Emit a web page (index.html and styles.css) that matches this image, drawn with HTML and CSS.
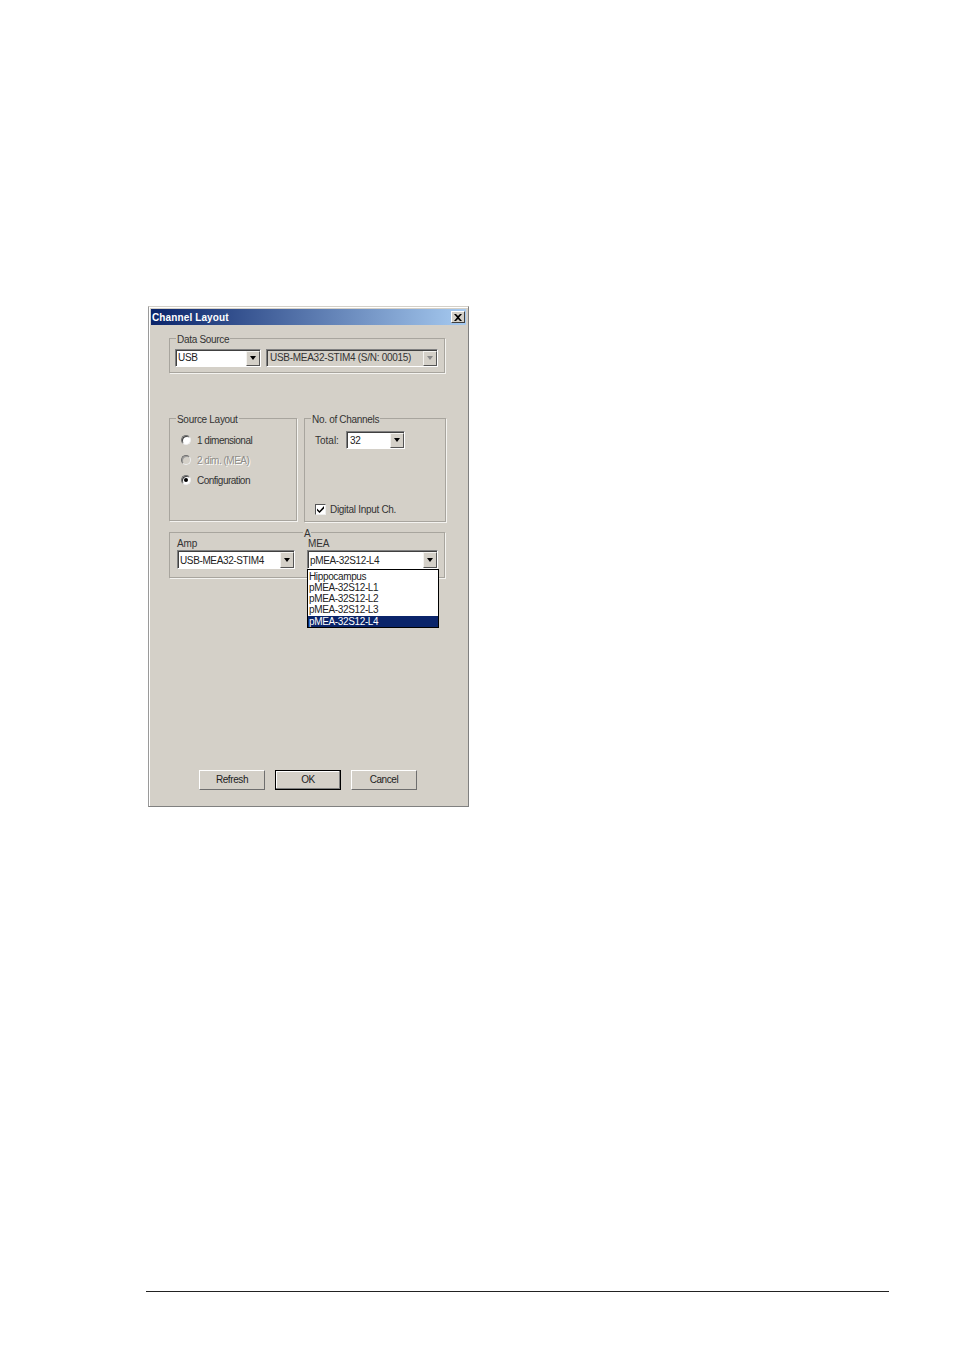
FILE: index.html
```html
<!DOCTYPE html>
<html lang="en">
<head>
<meta charset="utf-8">
<title>Channel Layout</title>
<link rel="stylesheet" href="styles.css">
</head>
<body>
<main class="page">
  <section class="dialog">
    <header class="titlebar">
      <span class="title">Channel Layout</span>
      <button class="close" aria-label="Close"><svg width="8" height="7" viewBox="0 0 8 7"><path d="M0 0h2l2 2 2-2h2L5 3.500 8 7H6L4 5 2 7H0l3-3.500z" fill="#000"/></svg></button>
    </header>
    <div class="content">
      <fieldset class="group group-source">
        <legend>Data Source</legend>
        <div class="combo combo-usb"><span class="value">USB</span><span class="arrow"><i></i></span></div>
        <div class="combo combo-device disabled"><span class="value">USB-MEA32-STIM4 (S/N: 00015)</span><span class="arrow"><i></i></span></div>
      </fieldset>
      <div class="middle">
        <fieldset class="group group-layout">
          <legend>Source Layout</legend>
          <label class="radio"><span class="dot"></span>1 dimensional</label>
          <label class="radio disabled"><span class="dot"></span>2 dim. (MEA)</label>
          <label class="radio"><span class="dot on"></span>Configuration</label>
        </fieldset>
        <fieldset class="group group-channels">
          <legend>No. of Channels</legend>
          <div class="total"><span class="total-label">Total:</span><div class="combo combo-total"><span class="value">32</span><span class="arrow"><i></i></span></div></div>
          <label class="check"><span class="box"><svg width="9" height="9" viewBox="0 0 9 9"><path d="M1 3.500l2.500 2.500L8 1v2.500L3.500 8 1 5.500z" fill="#000"/></svg></span>Digital Input Ch.</label>
        </fieldset>
      </div>
      <fieldset class="group group-a">
        <legend>A</legend>
        <div class="field field-amp">
          <span class="caption">Amp</span>
          <div class="combo combo-amp"><span class="value">USB-MEA32-STIM4</span><span class="arrow"><i></i></span></div>
        </div>
        <div class="field field-mea">
          <span class="caption">MEA</span>
          <div class="combo combo-mea"><span class="value">pMEA-32S12-L4</span><span class="arrow"><i></i></span></div>
          <ul class="list">
            <li>Hippocampus</li>
            <li>pMEA-32S12-L1</li>
            <li>pMEA-32S12-L2</li>
            <li>pMEA-32S12-L3</li>
            <li class="selected">pMEA-32S12-L4</li>
          </ul>
        </div>
      </fieldset>
      <div class="buttons">
        <button class="btn">Refresh</button>
        <button class="btn default">OK</button>
        <button class="btn">Cancel</button>
      </div>
    </div>
  </section>
  <hr class="rule">
</main>
</body>
</html>
```
FILE: styles.css
```css
* { box-sizing: border-box; }
html, body { margin: 0; padding: 0; background: #fff; }
body { width: 954px; height: 1350px; overflow: hidden; font-family: "Liberation Sans", Arial, sans-serif; font-size: 10px; letter-spacing: -0.3px; color: #222; }
.page { padding: 306px 0 0 148px; }

.dialog {
  width: 321px; height: 501px; background: #d4d0c8;
  border: 1px solid #808080; border-top-color: #d4d0c8; border-left-color: #9a9a9a;
  box-shadow: inset 1px 1px 0 #fff; padding: 2px 2px 0 2px;
  display: flex; flex-direction: column;
}
.titlebar {
  height: 16px; flex: none; display: flex; align-items: center; justify-content: space-between;
  background: linear-gradient(90deg, #0a246a, #a6caf0); padding: 0 1px;
}
.title { color: #fff; font-weight: 700; letter-spacing: 0.12px; }
.close {
  width: 14px; height: 12px; padding: 0; background: #d4d0c8; display: flex; align-items: center; justify-content: center;
  border: 1px solid; border-color: #fff #404040 #404040 #fff;
}

.content { padding: 0 0 0 18px; flex: 1; display: flex; flex-direction: column; }

.group {
  margin: 0; padding: 0; min-width: 0; border: 0; position: relative;
  box-shadow: inset 1px 1px 0 #a8a59e, inset -1px -1px 0 #a8a59e, 1px 1px 0 #f4f3f0;
}
.group legend {
  position: absolute; top: -4px; left: 7px; padding: 0 1px; background: #d4d0c8;
  line-height: 12px; color: #333; white-space: nowrap;
}
.group-a legend { left: 134px; }

.group-source { width: 276px; height: 35px; margin-top: 13px; display: flex; gap: 5px; padding: 11px 0 0 6px; }
.middle { display: flex; gap: 7px; margin-top: 45px; height: 104px; }
.group-layout { width: 128px; height: 103px; padding-top: 12px; }
.group-channels { width: 142px; height: 104px; display: flex; flex-direction: column; justify-content: space-between; padding: 13px 0 7px 11px; }
.group-a { width: 276px; height: 46px; margin-top: 10px; display: flex; padding: 6px 0 0 8px; }

.combo {
  height: 18px; display: flex; align-items: center; justify-content: space-between; background: #fff;
  border: 1px solid; border-color: #808080 #fff #fff #808080;
  box-shadow: inset 1px 1px 0 #404040; padding: 0 0 0 2px; color: #222;
}
.combo .value { white-space: nowrap; }
.group-source .value { padding-bottom: 1px; }
.arrow {
  width: 14px; height: 15px; background: #d4d0c8; display: flex; align-items: center; justify-content: center;
  border: 1px solid; border-color: #f4f3f0 #555 #555 #f4f3f0;
}
.arrow i { width: 0; height: 0; border-style: solid; border-width: 4px 3.5px 0; border-color: #000 transparent transparent; }

.combo-usb { width: 86px; }
.combo-device { width: 172px; background: #d4d0c8; padding-left: 3px; letter-spacing: -0.28px; }
.combo-device .arrow i { border-top-color: #888; }
.combo-device .value { color: #333; }
.combo-total { width: 59px; padding-left: 3px; }
.combo-amp { width: 118px; height: 19px; letter-spacing: -0.37px; }
.combo-mea { width: 131px; height: 19px; letter-spacing: -0.36px; }
.combo-amp .arrow, .combo-mea .arrow { height: 16px; }
.combo-amp .value, .combo-mea .value { padding-top: 1px; }

.radio { display: flex; align-items: center; gap: 6px; height: 20px; margin-left: 12px; color: #333; letter-spacing: -0.5px; }
.radio.disabled { color: #8f8d88; text-shadow: 1px 1px 0 #fff; }
.dot {
  width: 10px; height: 10px; border-radius: 50%; background: #fff; flex: none;
  border: 1px solid #6f6f6f; border-right-color: #eee; border-bottom-color: #eee;
  box-shadow: inset 1px 1px 0 #404040;
  display: flex; align-items: center; justify-content: center;
}
.radio.disabled .dot { background: #d4d0c8; box-shadow: inset 1px 1px 0 #999; }
.dot.on::after { content: ""; width: 4px; height: 4px; border-radius: 50%; background: #000; }

.total { display: flex; align-items: center; gap: 7px; color: #333; }
.total-label { width: 24px; letter-spacing: 0; }
.check { display: flex; align-items: center; gap: 4px; color: #333; }
.box {
  width: 11px; height: 11px; background: #fff; display: flex; align-items: center; justify-content: center;
  border: 1px solid; border-color: #555 #eee #eee #555;
}

.field { display: flex; flex-direction: column; position: relative; }
.field-amp { width: 130px; }
.caption { line-height: 11px; height: 11px; color: #333; letter-spacing: -0.1px; margin-bottom: 1px; }
.field-mea .caption { margin-left: 1px; }

.list {
  position: absolute; left: 0; top: 31px; width: 132px; height: 59px; margin: 0; padding: 1px 0 0; list-style: none;
  background: #fff; border: 1px solid #000; z-index: 2; letter-spacing: -0.36px;
}
.list li { height: 11px; line-height: 11px; padding-left: 1px; color: #222; white-space: nowrap; }
.list li.selected { background: #0a246a; color: #fff; margin-top: 1px; }

.buttons { display: flex; gap: 10px; margin-top: 192px; padding-left: 30px; }
.btn {
  width: 66px; height: 20px; padding: 0 0 2px; background: #d4d0c8; font: 10px "Liberation Sans", Arial, sans-serif; letter-spacing: -0.4px; color: #222;
  border: 1px solid; border-color: #fff #6e6e6e #6e6e6e #fff;
}
.btn.default { border: 1px solid #000; box-shadow: inset -1px -1px 0 #808080, inset 1px 1px 0 #fff; }

.rule { position: absolute; left: 146px; top: 1291px; width: 743px; height: 1px; margin: 0; border: 0; background: #222; }
```
